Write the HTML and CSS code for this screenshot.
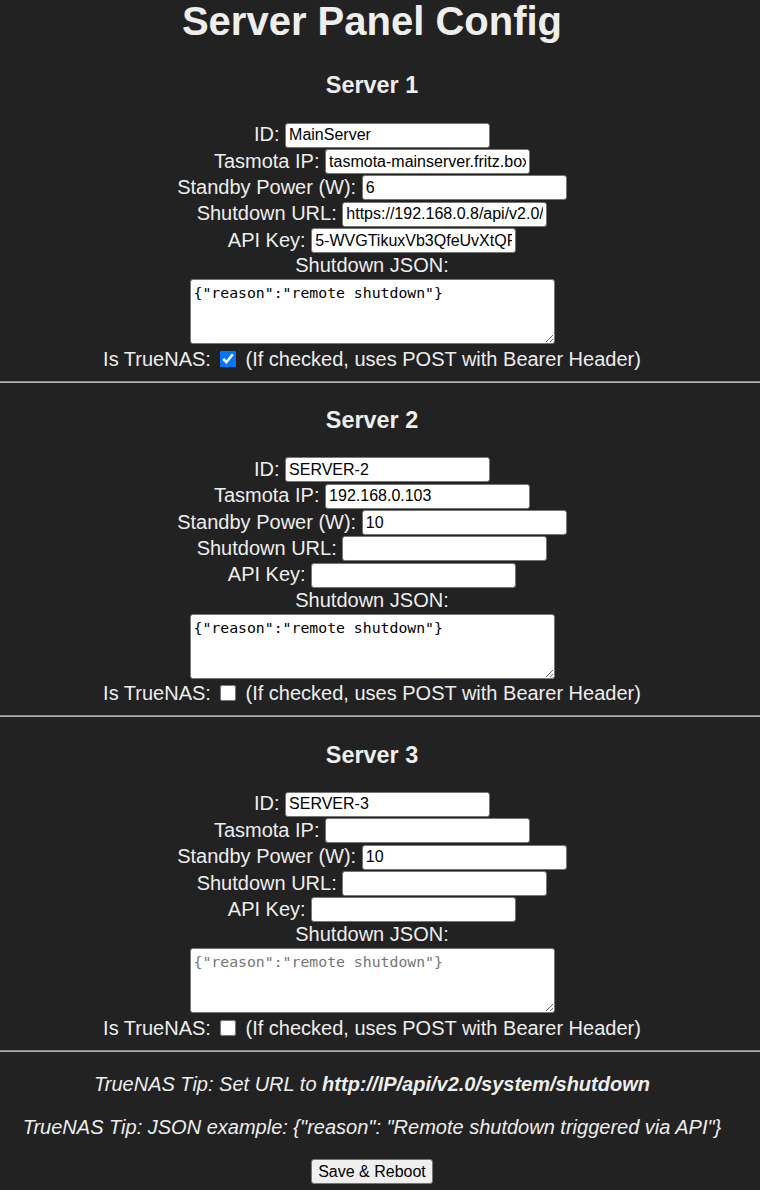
FILE: index.html
```html
<!DOCTYPE html>
<html lang="en">
<head>
<meta charset="utf-8">
<title>Server Panel Config</title>
<link rel="stylesheet" href="styles.css">
</head>
<body>
<main class="page">
  <h1 class="title">Server Panel Config</h1>

  <section class="server">
    <h3 class="server-title">Server 1</h3>
    <div class="row"><label class="lbl">ID:</label><input class="field" type="text" value="MainServer"></div>
    <div class="row"><label class="lbl">Tasmota IP:</label><input class="field" type="text" value="tasmota-mainserver.fritz.box"></div>
    <div class="row"><label class="lbl">Standby Power (W):</label><input class="field" type="text" value="6"></div>
    <div class="row"><label class="lbl">Shutdown URL:</label><input class="field" type="text" value="https://192.168.0.8/api/v2.0/system/shutdown"></div>
    <div class="row"><label class="lbl">API Key:</label><input class="field" type="text" value="5-WVGTikuxVb3QfeUvXtQFkz8sLmPq"></div>
    <div class="json-label">Shutdown JSON:</div>
    <textarea class="json" placeholder='{"reason":"remote shutdown"}'>{"reason":"remote shutdown"}</textarea>
    <div class="check-row">Is TrueNAS: <input class="check" type="checkbox" checked> (If checked, uses POST with Bearer Header)</div>
  </section>
  <hr class="sep">

  <section class="server">
    <h3 class="server-title">Server 2</h3>
    <div class="row"><label class="lbl">ID:</label><input class="field" type="text" value="SERVER-2"></div>
    <div class="row"><label class="lbl">Tasmota IP:</label><input class="field" type="text" value="192.168.0.103"></div>
    <div class="row"><label class="lbl">Standby Power (W):</label><input class="field" type="text" value="10"></div>
    <div class="row"><label class="lbl">Shutdown URL:</label><input class="field" type="text" value=""></div>
    <div class="row"><label class="lbl">API Key:</label><input class="field" type="text" value=""></div>
    <div class="json-label">Shutdown JSON:</div>
    <textarea class="json" placeholder='{"reason":"remote shutdown"}'>{"reason":"remote shutdown"}</textarea>
    <div class="check-row">Is TrueNAS: <input class="check" type="checkbox"> (If checked, uses POST with Bearer Header)</div>
  </section>
  <hr class="sep">

  <section class="server">
    <h3 class="server-title">Server 3</h3>
    <div class="row"><label class="lbl">ID:</label><input class="field" type="text" value="SERVER-3"></div>
    <div class="row"><label class="lbl">Tasmota IP:</label><input class="field" type="text" value=""></div>
    <div class="row"><label class="lbl">Standby Power (W):</label><input class="field" type="text" value="10"></div>
    <div class="row"><label class="lbl">Shutdown URL:</label><input class="field" type="text" value=""></div>
    <div class="row"><label class="lbl">API Key:</label><input class="field" type="text" value=""></div>
    <div class="json-label">Shutdown JSON:</div>
    <textarea class="json" placeholder='{"reason":"remote shutdown"}'></textarea>
    <div class="check-row">Is TrueNAS: <input class="check" type="checkbox"> (If checked, uses POST with Bearer Header)</div>
  </section>
  <hr class="sep">

  <div class="tips">
    <p class="tip">TrueNAS Tip: Set URL to <b>http://IP/api/v2.0/system/shutdown</b></p>
    <p class="tip">TrueNAS Tip: JSON example: {"reason": "Remote shutdown triggered via API"}</p>
    <button class="save" type="button">Save &amp; Reboot</button>
  </div>
</main>
</body>
</html>
```

FILE: styles.css
```css
html, body {
  margin: 0;
  padding: 0;
  background: #222222;
}

body {
  color: #eeeeee;
  font-family: "Liberation Sans", Arial, sans-serif;
  font-size: 20px;
  line-height: 23px;
  text-align: center;
  overflow: hidden;
}

.page {
  padding: 0 16px 0 0;
}

.title {
  margin: -2px 0 4px;
  font-size: 40px;
  line-height: 46px;
  font-weight: bold;
}

.server {
  padding-top: 24.4px;
}

.server-title {
  margin: 0 0 22.6px;
  font-size: 23.4px;
  line-height: 27px;
  font-weight: bold;
}

.row {
  display: flex;
  justify-content: center;
  align-items: center;
  gap: 5.6px;
  height: 26.4px;
}

.lbl {
  white-space: nowrap;
  padding-bottom: 1px;
}

.field {
  box-sizing: border-box;
  width: 205px;
  height: 25px;
  margin: 0;
  padding: 1px 3px;
  border: 1px solid #767676;
  border-radius: 3px;
  background: #ffffff;
  color: #000000;
  font-family: "Liberation Sans", Arial, sans-serif;
  font-size: 16px;
  text-align: left;
}

.json-label {
  line-height: 23px;
}

.json {
  display: block;
  box-sizing: border-box;
  width: 365px;
  height: 65px;
  margin: 2px auto 0;
  padding: 3px 3px 2px 3px;
  border: 1px solid #767676;
  border-radius: 3px;
  background: #ffffff;
  color: #000000;
  font-family: "DejaVu Sans Mono", "Liberation Mono", monospace;
  font-size: 14.8px;
  line-height: 19.5px;
  text-align: left;
  resize: both;
}

.json::placeholder {
  color: #757575;
}

.check-row {
  margin-top: 3.6px;
  line-height: 23px;
}

.check {
  width: 16px;
  height: 16px;
  margin: 0 4px 0 3.5px;
  vertical-align: -1px;
  accent-color: #0075ff;
}

.sep {
  display: block;
  height: 0;
  margin: 10.1px -16px 0 0;
  border: none;
  border-top: 1px solid #8a8a8a;
  border-bottom: 1px solid #b0b0b0;
}

.tips {
  padding-top: 21.5px;
}

.tip {
  margin: 0 0 20px;
  font-style: italic;
  line-height: 23px;
}

.save {
  display: block;
  box-sizing: border-box;
  height: 25px;
  margin: 1px auto 0;
  padding: 1px 6px;
  border: 1px solid #767676;
  border-radius: 3px;
  background: #efefef;
  color: #000000;
  font-family: "Liberation Sans", Arial, sans-serif;
  font-size: 16px;
}
```
